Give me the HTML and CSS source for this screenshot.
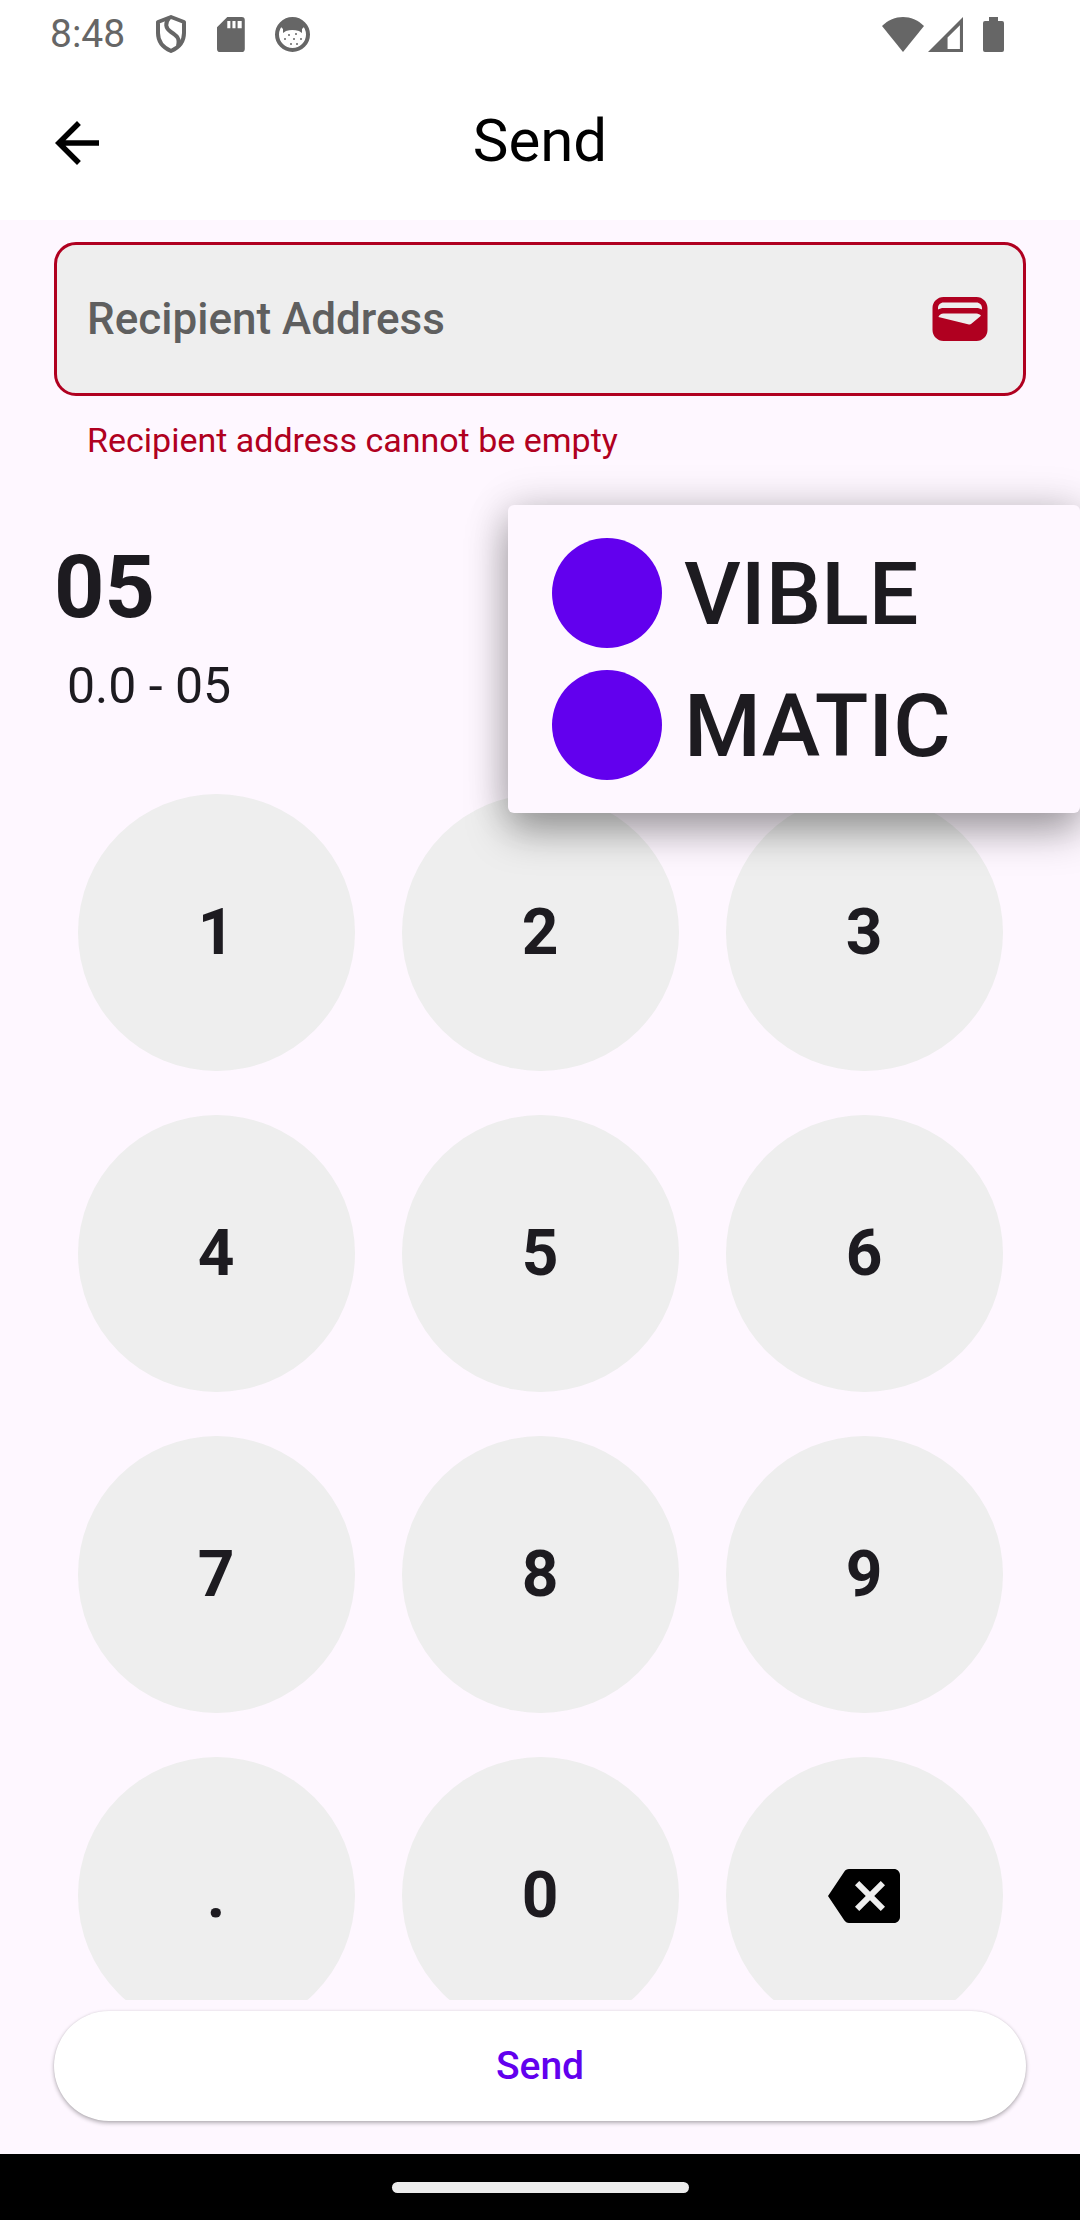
FILE: index.html
```html
<!DOCTYPE html>
<html lang="en">
<head>
<meta charset="utf-8">
<meta name="viewport" content="width=device-width, initial-scale=1">
<title>Send</title>
<link rel="stylesheet" href="styles.css">
</head>
<body>
<div class="app">
  <div class="status-bar">
    <div class="status-group">
      <span class="clock">8:48</span>
      <svg class="status-icon shield" viewBox="0 0 32 38" aria-hidden="true"><path d="M16 2 L29 7 V18 C29 27 23 33 16 36 C9 33 3 27 3 18 V7 Z" fill="none" stroke="currentColor" stroke-width="4" stroke-linejoin="round"/><path d="M14 3C10 8 10 13 16 17C22 21 25 23 23 31" fill="none" stroke="currentColor" stroke-width="4"/></svg>
      <svg class="status-icon sd-card" viewBox="0 0 27 34" aria-hidden="true"><path fill="currentColor" fill-rule="evenodd" d="M10 0H24a3 3 0 0 1 3 3V31a3 3 0 0 1-3 3H3a3 3 0 0 1-3-3V10ZM10 4V11H13V4ZM15 4V11H18V4ZM20 4V11H24V4Z"/></svg>
      <svg class="status-icon debug" viewBox="0 0 35 35" aria-hidden="true"><circle cx="17.500" cy="17.500" r="15.500" fill="none" stroke="currentColor" stroke-width="4"/><path fill="currentColor" d="M4 8C10 0 25 0 31 8L27 12L27 16L24 14Q17 12 11 14L8 16V12Z"/><g fill="currentColor"><circle cx="10" cy="22" r="1"/><circle cx="21" cy="17" r="1"/><circle cx="26" cy="22" r="1"/><circle cx="16" cy="27" r="1"/><circle cx="19" cy="22" r="1"/><circle cx="14" cy="18" r="1"/><circle cx="22" cy="27" r="1"/></g></svg>
    </div>
    <div class="status-group status-right">
      <svg class="status-icon wifi" viewBox="0 0 42 35" aria-hidden="true"><path fill="currentColor" d="M0 9C12-3 30-3 42 9L21 35Z"/></svg>
      <svg class="status-icon signal" viewBox="0 0 34 34" aria-hidden="true"><path fill="currentColor" fill-rule="evenodd" d="M34 0V34H0ZM31 8L19 20V31H31Z"/></svg>
      <svg class="status-icon battery" viewBox="0 0 21 35" aria-hidden="true"><path fill="currentColor" d="M6 0H15V4H19a2 2 0 0 1 2 2V33a2 2 0 0 1-2 2H2a2 2 0 0 1-2-2V6a2 2 0 0 1 2-2H6Z"/></svg>
    </div>
  </div>

  <header class="top-bar">
    <button class="icon-button" type="button" aria-label="Back">
      <svg class="icon" viewBox="0 0 24 24" aria-hidden="true"><path fill="currentColor" d="M20 11H7.830l5.590-5.590L12 4l-8 8 8 8 1.410-1.410L7.830 13H20v-2z"/></svg>
    </button>
    <h1 class="title">Send</h1>
  </header>

  <main class="content">
    <div class="field">
      <input class="field-input" id="recipient" type="text" placeholder="Recipient Address" aria-label="Recipient Address" aria-invalid="true" aria-describedby="recipient-error">
      <button class="icon-button wallet" type="button" aria-label="Wallet">
        <svg class="icon" viewBox="0 0 24 24" aria-hidden="true"><path fill="currentColor" d="M18,4H6C3.790,4 2,5.790 2,8v8c0,2.210 1.790,4 4,4h12c2.210,0 4,-1.790 4,-4V8C22,5.790 20.210,4 18,4zM16.140,13.770c-0.240,0.200 -0.570,0.280 -0.880,0.200L4.150,11.250C4.450,10.520 5.160,10 6,10h12c0.670,0 1.260,0.340 1.630,0.840L16.140,13.770zM6,6h12c1.100,0 2,0.900 2,2v0.550C19.410,8.210 18.730,8 18,8H6C5.270,8 4.590,8.210 4,8.550V8C4,6.900 4.900,6 6,6z"/></svg>
      </button>
    </div>
    <p class="field-error" id="recipient-error">Recipient address cannot be empty</p>

    <section class="amount">
      <p class="amount-value">05</p>
      <p class="amount-balance">0.0 - 05</p>
      <div class="token-menu" role="menu" aria-label="Token">
        <button class="token" type="button" role="menuitem"><span class="token-logo"></span>VIBLE</button>
        <button class="token" type="button" role="menuitem"><span class="token-logo"></span>MATIC</button>
      </div>
    </section>

    <div class="keypad">
      <button class="key" type="button">1</button>
      <button class="key" type="button">2</button>
      <button class="key" type="button">3</button>
      <button class="key" type="button">4</button>
      <button class="key" type="button">5</button>
      <button class="key" type="button">6</button>
      <button class="key" type="button">7</button>
      <button class="key" type="button">8</button>
      <button class="key" type="button">9</button>
      <button class="key" type="button">.</button>
      <button class="key" type="button">0</button>
      <button class="key" type="button" aria-label="Backspace">
        <svg class="backspace" viewBox="0 0 24 24" aria-hidden="true"><path fill="currentColor" d="M22 3H7c-.69 0-1.230.350-1.590.880L0 12l5.410 8.110c.360.530.9.890 1.590.890h15c1.100 0 2-.9 2-2V5c0-1.100-.9-2-2-2zm-3 12.590L17.590 17 14 13.410 10.410 17 9 15.590 12.590 12 9 8.410 10.410 7 14 10.590 17.590 7 19 8.410 15.410 12 19 15.590z"/></svg>
      </button>
    </div>
  </main>

  <footer class="actions">
    <button class="send-button" type="button">Send</button>
  </footer>
  <div class="nav-bar"><span class="nav-handle"></span></div>
</div>
</body>
</html>
```
FILE: styles.css
```css
* {
  box-sizing: border-box;
}

body {
  margin: 0;
  background: #fef7ff;
  color: #1d1b20;
  font-family: Roboto, "Liberation Sans", sans-serif;
}

button {
  border: 0;
  padding: 0;
  background: none;
  color: inherit;
  font: inherit;
}

p,
h1 {
  margin: 0;
}

.app {
  display: flex;
  flex-direction: column;
  height: 100vh;
}

/* System status bar */
.status-bar {
  display: flex;
  justify-content: space-between;
  align-items: center;
  height: 66px;
  padding: 2px 76px 0 50px;
  background: #fff;
  color: #666;
}

.status-group {
  display: flex;
  align-items: center;
  gap: 30px;
}

.status-right {
  gap: 4px;
}

.clock {
  font-size: 39px;
  line-height: 64px;
}

.status-icon {
  display: block;
  height: 35px;
}

.shield {
  height: 38px;
}

.battery {
  margin-left: 16px;
}

/* App bar */
.top-bar {
  display: grid;
  grid-template-columns: 66px 1fr 66px;
  align-items: center;
  height: 154px;
  padding: 0 44px;
  background: #fff;
  color: #000;
}

.title {
  padding-bottom: 4px;
  font-size: 60px;
  line-height: 76px;
  font-weight: 400;
  text-align: center;
}

.icon-button,
.icon {
  display: block;
  width: 66px;
  height: 66px;
}

/* Form */
.content {
  display: flex;
  flex-direction: column;
  flex: 1;
  min-height: 0;
  padding: 22px 54px 0;
}

.field {
  display: flex;
  align-items: center;
  flex-shrink: 0;
  height: 154px;
  padding: 0 30px;
  border: 3px solid #b00020;
  border-radius: 22px;
  background: #eee;
}

.field-input {
  flex: 1;
  min-width: 0;
  padding: 0;
  border: 0;
  outline: 0;
  background: none;
  color: #1d1b20;
  font: 500 44px/66px Roboto, "Liberation Sans", sans-serif;
}

.field-input::placeholder {
  color: #5f5f5f;
  opacity: 1;
}

.wallet {
  color: #b00020;
}

.field-error {
  padding: 22px 33px 0;
  color: #b00020;
  font-size: 34px;
  line-height: 44px;
}

.amount {
  position: relative;
  padding: 73px 0 53px;
}

.amount-value {
  font-size: 88px;
  line-height: 104px;
  font-weight: 700;
}

.amount-balance {
  padding: 14px 13px 0;
  font-size: 50px;
  line-height: 66px;
}

/* Token menu opens over the amount and the keypad */
.token-menu {
  position: absolute;
  top: 43px;
  right: -54px;
  z-index: 1;
  display: flex;
  flex-direction: column;
  width: 572px;
  padding: 22px 0;
  border-radius: 6px;
  background: #fef7ff;
  box-shadow: 0 18px 40px rgba(0, 0, 0, 0.34), 0 0 44px rgba(0, 0, 0, 0.14);
}

.token {
  display: flex;
  align-items: center;
  gap: 22px;
  height: 132px;
  padding: 0 44px;
  font-size: 88px;
  font-weight: 500;
  text-align: left;
}

.token-logo {
  width: 110px;
  height: 110px;
  border-radius: 50%;
  background: #6200ee;
}

/* Keypad */
.keypad {
  display: grid;
  grid-template-columns: repeat(3, 1fr);
  align-content: start;
  row-gap: 44px;
  flex: 1;
  min-height: 0;
  padding-top: 22px;
  overflow-y: auto;
  scrollbar-width: none;
}

.key {
  display: flex;
  align-items: center;
  justify-content: center;
  justify-self: center;
  width: 277px;
  height: 277px;
  border-radius: 50%;
  background: #eee;
  font-size: 64px;
  font-weight: 700;
}

.backspace {
  width: 72px;
  height: 72px;
  color: #000;
}

/* Bottom action */
.actions {
  padding: 11px 54px 33px;
}

.send-button {
  display: block;
  width: 100%;
  height: 110px;
  border-radius: 55px;
  background: #fff;
  box-shadow: 0 2px 4px rgba(0, 0, 0, 0.3), 0 0 2px rgba(0, 0, 0, 0.08);
  color: #6200ee;
  font-size: 39px;
  font-weight: 500;
}

.nav-bar {
  display: flex;
  align-items: center;
  justify-content: center;
  height: 66px;
  background: #000;
}

.nav-handle {
  width: 297px;
  height: 11px;
  border-radius: 6px;
  background: #ececec;
}
```
